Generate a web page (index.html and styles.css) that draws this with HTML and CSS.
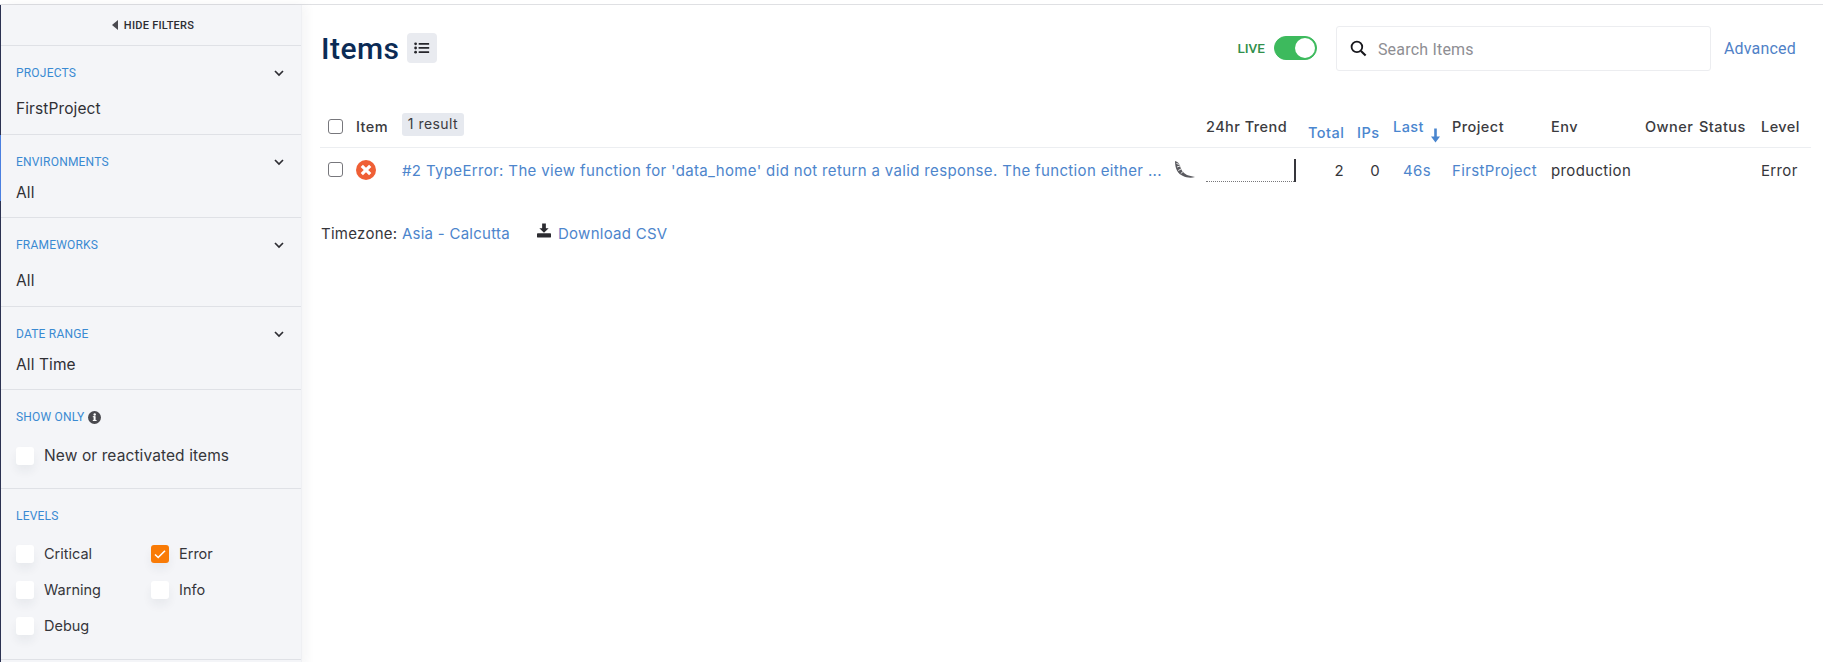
FILE: index.html
```html
<!DOCTYPE html>
<html lang="en">
<head>
<meta charset="utf-8">
<title>Items</title>
<link rel="stylesheet" href="styles.css">
</head>
<body>
<div class="app">
  <aside class="sidebar">
    <div class="hide-filters"><svg class="tri" width="6" height="10" viewBox="0 0 6 10"><path d="M6 0v10L0 5z"/></svg>HIDE FILTERS</div>
    <section class="filter f-projects">
      <div class="filter-head"><span class="label">PROJECTS</span><svg class="chev" width="10" height="7" viewBox="0 0 10 7"><path d="M1 1l4 4 4-4" /></svg></div>
      <div class="value">FirstProject</div>
    </section>
    <section class="filter f-env">
      <div class="filter-head"><span class="label">ENVIRONMENTS</span><svg class="chev" width="10" height="7" viewBox="0 0 10 7"><path d="M1 1l4 4 4-4" /></svg></div>
      <div class="value">All</div>
    </section>
    <section class="filter f-fw">
      <div class="filter-head"><span class="label">FRAMEWORKS</span><svg class="chev" width="10" height="7" viewBox="0 0 10 7"><path d="M1 1l4 4 4-4" /></svg></div>
      <div class="value">All</div>
    </section>
    <section class="filter f-date">
      <div class="filter-head"><span class="label">DATE RANGE</span><svg class="chev" width="10" height="7" viewBox="0 0 10 7"><path d="M1 1l4 4 4-4" /></svg></div>
      <div class="value">All Time</div>
    </section>
    <section class="filter f-show">
      <div class="show-head"><span class="label">SHOW ONLY</span><svg class="info" width="13" height="13" viewBox="0 0 13 13"><circle cx="6.5" cy="6.5" r="6.5" fill="#4a4a4f"/><rect x="5.6" y="5.4" width="2" height="4.4" fill="#fff"/><rect x="4.8" y="5.2" width="2.4" height="1" fill="#fff"/><rect x="4.8" y="9" width="3.8" height="1" fill="#fff"/><circle cx="6.7" cy="3.5" r="1.2" fill="#fff"/></svg></div>
      <label class="check"><span class="box"></span>New or reactivated items</label>
    </section>
    <section class="filter f-levels">
      <div class="label levels-label">LEVELS</div>
      <div class="levels">
        <label class="check"><span class="box"></span>Critical</label>
        <label class="check"><span class="box on"><svg width="18" height="18" viewBox="0 0 18 18"><path d="M4 9.500l3.200 3L14 5.800" fill="none" stroke="#fff" stroke-width="1.600"/></svg></span>Error</label>
        <label class="check"><span class="box"></span>Warning</label>
        <label class="check"><span class="box"></span>Info</label>
        <label class="check"><span class="box"></span>Debug</label>
      </div>
    </section>
  </aside>
  <main class="main">
    <header class="top">
      <h1>Items</h1>
      <span class="list-btn"><svg width="16" height="12" viewBox="0 0 16 12"><g fill="#26262b"><circle cx="1.600" cy="1.800" r="1.400"/><circle cx="1.600" cy="6" r="1.400"/><circle cx="1.600" cy="10.200" r="1.400"/><rect x="4.600" y="1" width="10.600" height="1.700" rx=".4"/><rect x="4.600" y="5.100" width="10.600" height="1.700" rx=".4"/><rect x="4.600" y="9.300" width="10.600" height="1.700" rx=".4"/></g></svg></span>
      <div class="top-right">
        <span class="live">LIVE</span>
        <span class="toggle"><span class="knob"></span></span>
        <div class="search">
          <svg width="17" height="17" viewBox="0 0 16 16"><circle cx="6.500" cy="6.500" r="5" fill="none" stroke="#17171c" stroke-width="1.700"/><path d="M10.300 10.300l4.400 4.400" stroke="#17171c" stroke-width="2"/></svg>
          <span>Search Items</span>
        </div>
        <a class="advanced">Advanced</a>
      </div>
    </header>
    <div class="row head">
      <span class="cb"></span>
      <span class="c-item">Item</span>
      <span class="c-title"><span class="badge">1 result</span></span>
      <span class="c-flask"></span>
      <span class="c-trend">24hr Trend</span>
      <span class="c-total link low">Total</span>
      <span class="c-ips link low">IPs</span>
      <span class="c-last link">Last<svg class="arrow" width="9" height="15" viewBox="0 0 9 14"><path d="M3.200 0h2.600v8H9l-4.500 6L0 8h3.200z" fill="#4a86cf"/></svg></span>
      <span class="c-project">Project</span>
      <span class="c-env">Env</span>
      <span class="c-owner">Owner</span>
      <span class="c-status">Status</span>
      <span class="c-level">Level</span>
    </div>
    <div class="row body">
      <span class="cb"></span>
      <span class="c-item"><svg width="20" height="20" viewBox="0 0 20 20"><circle cx="10" cy="10" r="10" fill="#ef5f35"/><path d="M5.800 5.800l8.400 8.400M14.200 5.800l-8.400 8.400" stroke="#fff" stroke-width="3.200"/></svg></span>
      <a class="c-title link title-text">#2 TypeError: The view function for 'data_home' did not return a valid response. The function either ...</a>
      <span class="c-flask"><svg width="21" height="18" viewBox="0 0 21 18"><path d="M1 0c3 1 4 2 5 5 1 4 3 7 7 9 2 1 5 1 8 2-4 1.500-9 .5-12-1C4 13 1 8 1 0z" fill="#5a5a5f"/><path d="M2.500 2.500l3 1M3 6l3.500-1.200M4.200 9.500l3.300-1.700M6.800 12.500l2.700-2.300" stroke="#eee" stroke-width="1"/></svg></span>
      <span class="c-trend spark"><span class="spark-bar"></span></span>
      <span class="c-total num">2</span>
      <span class="c-ips num">0</span>
      <a class="c-last link ago">46s</a>
      <a class="c-project link">FirstProject</a>
      <span class="c-env">production</span>
      <span class="c-owner"></span>
      <span class="c-status"></span>
      <span class="c-level">Error</span>
    </div>
    <div class="foot">
      <span>Timezone: <a class="link">Asia - Calcutta</a></span>
      <span class="download"><svg width="14" height="15" viewBox="0 0 15 15"><path d="M5.500 0h4v5h3l-5 5-5-5h3z" fill="#2b2b30"/><rect y="10.500" width="15" height="4.500" rx=".5" fill="#2b2b30"/></svg><a class="link">Download CSV</a></span>
    </div>
  </main>
</div>
</body>
</html>
```

FILE: styles.css
```css
* { box-sizing: border-box; }
html, body { margin: 0; height: 100%; background: #fff; overflow: hidden; }
body { font-family: Inter, "Liberation Sans", sans-serif; color: #36363b; font-size: 14px; }
.app { display: flex; height: 662px; border-top: 1px solid #dfe0e3; margin-top: 4px; }
.sidebar { width: 302px; flex: none; background: #f4f5f8; border-left: 1px solid #2c3252; box-shadow: 4px 0 10px rgba(30,35,60,.05); border-right: 1px solid #eff0f3; }
.hide-filters { height: 41px; border-bottom: 1px solid #dfe1e6; display: flex; align-items: center; justify-content: center; gap: 6px; padding-left: 4px; font: 500 11px Roboto, sans-serif; letter-spacing: .25px; color: #2d2d33; }
.tri { fill: #4a4a50; }
.filter { border-bottom: 1px solid #dfe1e6; padding: 20px 15px 0; position: relative; }
.filter-head { display: flex; justify-content: space-between; align-items: center; }
.label { font: 400 12px/14px Roboto, sans-serif; letter-spacing: .2px; color: #3a8ad2; }
.chev { fill: none; stroke: #2d2d33; stroke-width: 1.700; margin-right: 2px; }
.value { font-size: 15.500px; line-height: 20px; letter-spacing: .1px; color: #303035; }
.f-projects { height: 89px; }
.f-projects .value { margin-top: 19px; }
.f-env { height: 83px; }
.f-env::before { content: ""; position: absolute; left: -1px; top: 0; bottom: 16px; width: 1px; background: #4a7fe0; }
.f-env .value { margin-top: 14px; }
.f-fw { height: 89px; }
.f-fw .value { margin-top: 19px; }
.f-date { height: 83px; }
.f-date .value { margin-top: 14px; }
.f-show { height: 99px; }
.show-head { display: flex; align-items: center; gap: 4px; }
.check { display: flex; align-items: center; gap: 10px; line-height: 18px; color: #36363b; }
.f-show .check { margin-top: 23px; font-size: 15.500px; letter-spacing: .1px; }
.box { width: 18px; height: 18px; border-radius: 3px; background: #fff; box-shadow: 0 6px 10px rgba(40,45,70,.06); flex: none; display: block; }
.box.on { background: #f97b06; }
.box svg { display: block; }
.f-levels { height: 171px; }
.levels { display: grid; grid-template-columns: 135px 1fr; row-gap: 18px; margin-top: 22px; }
.levels .check { font-size: 14.500px; }
.main { flex: 1; min-width: 0; padding: 0 12px 0 18px; }
.top { display: flex; align-items: center; height: 86px; padding-left: 1px; }
h1 { margin: 0; padding-top: 2px; font: 500 30px/36px Roboto, sans-serif; letter-spacing: .45px; color: #0b2b55; }
.list-btn { width: 30px; height: 30px; border-radius: 4px; background: #e9ebf0; margin-left: 8px; display: flex; align-items: center; justify-content: center; }
.top-right { margin-left: auto; display: flex; align-items: center; height: 45px; }
.live { font: 500 13.500px Roboto, sans-serif; color: #31904c; margin-right: 9px; }
.toggle { width: 43px; height: 24px; border-radius: 12px; background: #3dba5d; border: 1px solid #3dba5d; padding: 1px; display: flex; justify-content: flex-end; }
.knob { width: 20px; height: 20px; border-radius: 50%; background: #fff; }
.search { width: 375px; height: 45px; margin-left: 19px; border: 1px solid #ecedf0; border-radius: 3px; display: flex; align-items: center; gap: 11px; padding-left: 13px; font: 400 16px Roboto, sans-serif; letter-spacing: .2px; color: #8e8e93; }
.search span { padding-top: 2px; }
.advanced { color: #4f81c7; font: 400 16px Roboto, sans-serif; letter-spacing: .2px; margin-left: 13px; margin-right: 15px; }
.row { display: grid; grid-template-columns: 28px 46px 771px 33px 102px 49px 36px 59px 99px 94px 54px 62px 50px; align-items: center; width: 1491px; padding-left: 8px; }
.head { height: 41px; margin-top: 16px; padding-top: 5px; padding-bottom: 7px; border-bottom: 1px solid #eceef1; font-size: 14.500px; font-weight: 500; color: #3b3b40; letter-spacing: .45px; }
.cb { width: 15px; height: 15px; border: 1.500px solid #77777c; border-radius: 3px; background: #fff; }
.link { color: #4d85cc; text-decoration: none; font-weight: 400; }
.head .link { font-weight: 500; color: #4a86cf; }
.low { position: relative; top: 6px; }
.c-last { position: relative; }
.arrow { position: absolute; left: 38px; top: 10px; }
.badge { display: block; width: 62px; background: #e6e9ef; border-radius: 3px; text-align: center; height: 23px; line-height: 22px; font-weight: 400; font-size: 14px; position: relative; top: -2px; }
.body { height: 46px; padding-bottom: 2px; font-size: 15px; letter-spacing: .35px; }
.body .cb { position: relative; top: -1px; }
.title-text { white-space: nowrap; }
.c-flask svg, .body .c-item svg { display: block; }
.c-flask { padding-left: 1px; }
.spark { height: 23px; border-bottom: 1px dotted #77777a; display: flex; justify-content: flex-end; width: 90px; margin-left: 0; }
.spark-bar { width: 2px; height: 23px; background: #36363c; }
.num { text-align: right; padding-right: 13px; }
.ago { padding-left: 10px; }
.foot { display: flex; align-items: center; gap: 27px; margin-top: 27px; padding-left: 1px; font-size: 15px; letter-spacing: .27px; height: 24px; }
.download { display: flex; align-items: center; gap: 7px; }
.download svg { margin-top: -6px; }
```
